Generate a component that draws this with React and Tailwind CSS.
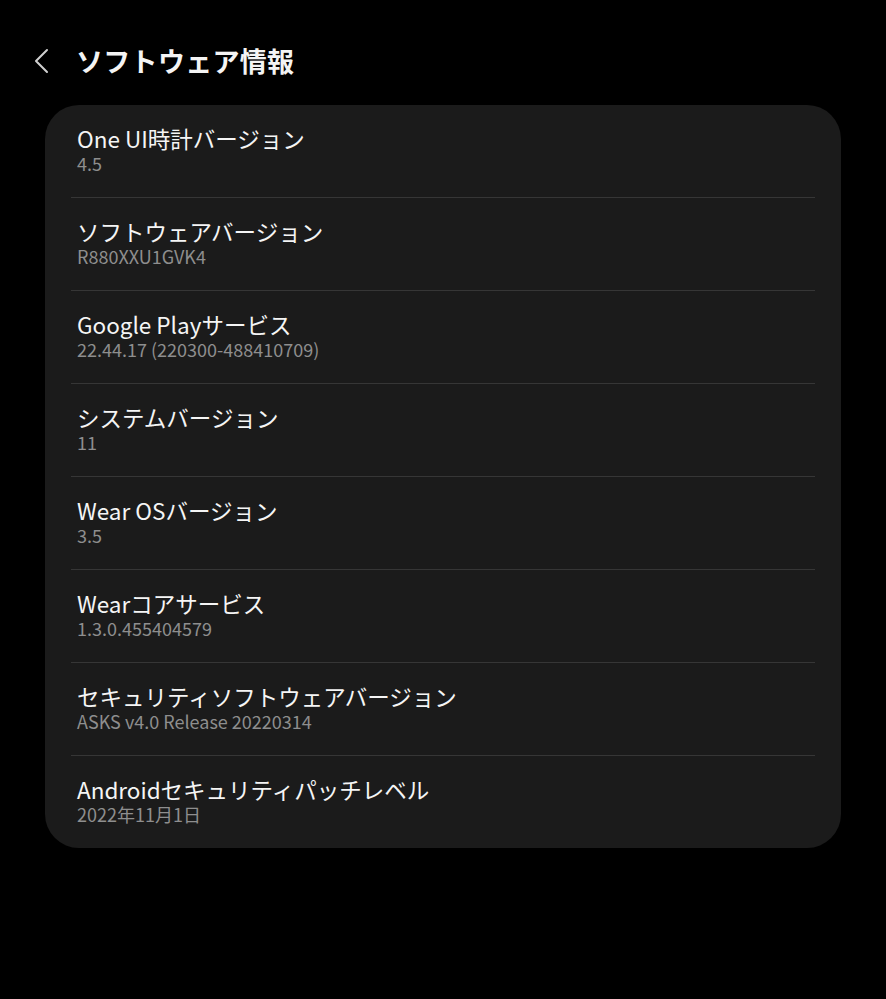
import React from "react";

const items = [
  { title: "One UI時計バージョン", value: "4.5" },
  { title: "ソフトウェアバージョン", value: "R880XXU1GVK4" },
  { title: "Google Playサービス", value: "22.44.17 (220300-488410709)" },
  { title: "システムバージョン", value: "11" },
  { title: "Wear OSバージョン", value: "3.5" },
  { title: "Wearコアサービス", value: "1.3.0.455404579" },
  { title: "セキュリティソフトウェアバージョン", value: "ASKS v4.0 Release 20220314" },
  { title: "Androidセキュリティパッチレベル", value: "2022年11月1日" },
];

const font = { fontFamily: '"Noto Sans CJK JP", "Noto Sans", sans-serif' };

export default function App() {
  return (
    <div className="min-h-[999px] w-[886px] bg-black text-white" style={font}>
      {/* Header */}
      <div className="flex items-center pt-[34px] h-[88px]">
        <button className="w-[76px] h-[54px] flex items-center justify-center pl-[18px] pr-[12px]">
          <svg width="16" height="26" viewBox="0 0 16 26" fill="none">
            <path d="M14 2 L3 13 L14 24" stroke="#d0d0d0" strokeWidth="2" strokeLinecap="round" strokeLinejoin="round" />
          </svg>
        </button>
        <h1 className="text-[27px] leading-[54px] font-bold tracking-[0.3px] text-[#f4f4f4]">ソフトウェア情報</h1>
      </div>

      {/* Card */}
      <div className="mx-[45px] mt-[17px] rounded-[34px] bg-[#1b1b1b] px-[26px]">
        {items.map((item, i) => (
          <div
            key={i}
            className={`pl-[6px] pt-[19px] pb-[23px] ${i < items.length - 1 ? "border-b border-[#363636]" : ""}`}
          >
            <div className="text-[22.5px] leading-[28px] text-[#f5f5f5]">{item.title}</div>
            <div className="text-[18px] leading-[22px] text-[#8e8e8e]">{item.value}</div>
          </div>
        ))}
      </div>
    </div>
  );
}
